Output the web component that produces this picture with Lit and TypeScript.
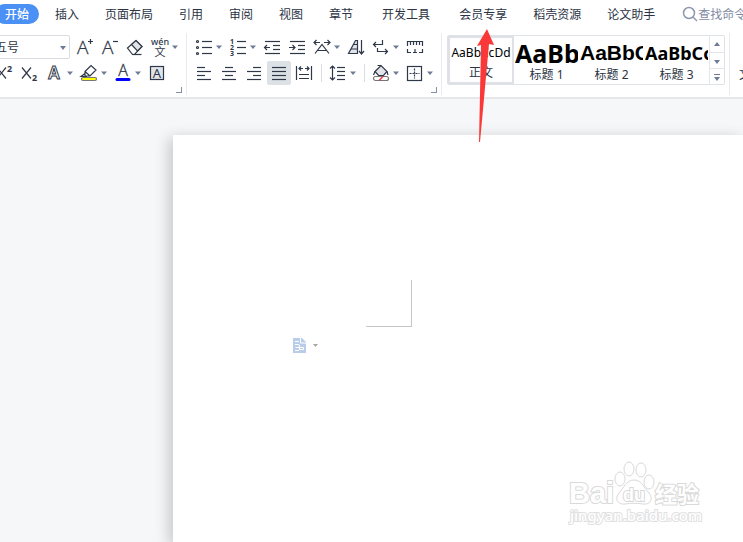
import { LitElement, html, svg, css, nothing, TemplateResult } from "lit";
import { customElement } from "lit/decorators.js";
import { classMap } from "lit/directives/class-map.js";

interface Tool {
  label: string;
  art: TemplateResult;
  menu?: boolean;
  active?: boolean;
}

const caret = svg`<path class="caret" d="M24 10.5h6l-3 3.5z"/>`;
const lines = (rows: number[][]) =>
  rows.map(([x1, x2, y]) => svg`<path d="M${x1} ${y}H${x2}"/>`);

const fontTop: Tool[] = [
  { label: "增大字号", art: svg`<text class="thin" x="4" y="19" font-size="19">A</text><path d="M15 6.5h5M17.500 4v5"/>` },
  { label: "减小字号", art: svg`<text class="thin" x="4" y="19" font-size="19">A</text><path d="M15 6.5h5"/>` },
  { label: "清除格式", art: svg`<path d="M4.500 13L13 5.500l6 6-7.500 8H9.500z"/><path class="tint" d="M8.500 9.500L13 5.500l6 6-4.500 4.500z"/><path d="M9.500 19.500h9"/>` },
  { label: "拼音指南", menu: true, art: svg`<text x="12" y="10" font-size="9" font-weight="500" text-anchor="middle">wén</text><text x="12" y="21" font-size="11" text-anchor="middle">文</text>` },
];

const fontBottom: Tool[] = [
  { label: "上标", art: svg`<path d="M4 6.500l9 11M13 6.500l-9 11"/><text class="script" x="14" y="11">2</text>` },
  { label: "下标", art: svg`<path d="M4 6.500l9 11M13 6.500l-9 11"/><text class="script" x="14" y="20">2</text>` },
  { label: "文字效果", menu: true, art: svg`<text class="outline" x="11" y="18" font-size="17" text-anchor="middle">A</text>` },
  { label: "突出显示", menu: true, art: svg`<path d="M8 10.500l6-6 5 4.500-6 6H8zM8 10.500l5 4.500M8 12.500l-4 3h6"/><rect class="marker" x="4.500" y="16.500" width="15" height="3" rx="1.500"/>` },
  { label: "字体颜色", menu: true, art: svg`<text class="thin" x="12" y="15" font-size="16" text-anchor="middle">A</text><path class="blue" d="M6 18.500h12"/>` },
  { label: "字符底纹", art: svg`<rect class="tint" x="5.500" y="5.500" width="13" height="13"/><text x="12" y="17" font-size="13" text-anchor="middle">A</text>` },
];

const paraTop: Tool[] = [
  { label: "项目符号", menu: true, art: svg`<circle cx="5.500" cy="6.500" r="1"/><circle cx="5.500" cy="12.500" r="1"/><circle cx="5.500" cy="18.500" r="1"/>${lines([[10, 20, 6.5], [10, 20, 12.5], [10, 20, 18.5]])}` },
  { label: "编号", menu: true, art: svg`<text class="num" x="4" y="9">1</text><text class="num" x="4" y="15">2</text><text class="num" x="4" y="21">3</text>${lines([[11, 20, 6.5], [11, 20, 12.5], [11, 20, 18.5]])}` },
  { label: "减少缩进量", art: svg`${lines([[5, 20, 6.5], [13, 20, 10.5], [13, 20, 14.5], [5, 20, 18.5]])}<path d="M10 12.500H4.500M7 10l-2.500 2.500L7 15"/>` },
  { label: "增加缩进量", art: svg`${lines([[5, 20, 6.5], [13, 20, 10.5], [13, 20, 14.5], [5, 20, 18.5]])}<path d="M4 12.500h6M7.500 10l2.500 2.500L7.500 15"/>` },
  { label: "中文版式", menu: true, art: svg`<path d="M4 7.500h6M6.500 5L4 7.500 6.500 10M14 7.500h6M17.500 5L20 7.500 17.500 10M5 18.500l7-9 7 9M8 15.500h8"/>` },
  { label: "排序", art: svg`<path class="tint" d="M4.500 18.500h9v-13h-2z"/><path d="M9.500 9.500h4M7 14h6.500M17.500 5v14M15 16l2.500 3 2.500-3"/>` },
  { label: "显示段落标记", menu: true, art: svg`<path d="M13.500 5v4.500h-9M7 7L4.500 9.500 7 12M8.500 13v3.500h10M16 14l2.500 2.500L16 19"/>` },
  { label: "标尺", art: svg`<path d="M4.500 11V6.500h15V11M7.500 7v3M10.500 7v3M13.500 7v3M16.500 7v3M4.500 14v3.500H8M10 17.500h4M12 14v3.500M16 17.500h3.500V14"/>` },
];

const paraAlign: Tool[] = [
  { label: "左对齐", art: svg`${lines([[5, 13, 6.5], [5, 19, 10.5], [5, 13, 14.5], [5, 19, 18.5]])}` },
  { label: "居中对齐", art: svg`${lines([[8, 16, 6.5], [5, 19, 10.5], [8, 16, 14.5], [5, 19, 18.5]])}` },
  { label: "右对齐", art: svg`${lines([[11, 19, 6.5], [5, 19, 10.5], [11, 19, 14.5], [5, 19, 18.5]])}` },
  { label: "两端对齐", active: true, art: svg`${lines([[5, 19, 6.5], [5, 19, 10.5], [5, 19, 14.5], [5, 19, 18.5]])}` },
  { label: "分散对齐", art: svg`<path d="M4.500 5v14M19.500 5v14M7 7.500h4M9 5.500l-2 2 2 2M13 7.500h4M15 5.500l2 2-2 2M7 13.500h10M7 17.500h10"/>` },
];
const paraSpacing: Tool[] = [
  { label: "行距", menu: true, art: svg`<path d="M6.500 5v14M4 7.500L6.500 5 9 7.500M4 16.500L6.500 19 9 16.500"/>${lines([[11, 19, 6.5], [11, 19, 10.5], [11, 19, 14.5], [11, 19, 18.5]])}` },
];
const paraFill: Tool[] = [
  { label: "底纹颜色", menu: true, art: svg`<path class="tint" d="M6 10.500l6-6 6 6-3.500 4h-5z"/><path d="M8.500 4.500h3.500M18 10.500l1 3.500M6 10.500l-1.500 3.500"/><rect class="swatch" x="4.500" y="15.500" width="15" height="4" rx="2"/><path class="red" d="M10 19.500l4-4"/>` },
  { label: "边框", menu: true, art: svg`<rect x="4.500" y="5.500" width="14" height="14"/><path stroke-dasharray="2 1" d="M11.500 7.500v10M6.500 12.500h10"/>` },
];

@customElement("tool-row")
class ToolRow extends LitElement {
  static properties = { tools: { attribute: false } };
  declare tools: Tool[];
  static styles = css`
    :host { display: flex; gap: 1px; flex: none; }
    button { width: 24px; height: 24px; padding: 0; border: 0; background: none; border-radius: 2px; flex: none; }
    .menu { width: 33px; }
    .active { background: #dce1e6; }
    svg { display: block; width: 100%; height: 24px; fill: none; stroke: #2f3848; stroke-width: 1.2px; overflow: visible; }
    text { fill: #2f3848; stroke: none; font-family: "Noto Sans", "Noto Sans CJK SC", sans-serif; }
    .thin { font-family: "Open Sans", sans-serif; font-weight: 300; stroke: #2f3848; stroke-width: 0.3px; }
    .outline { fill: #fff; stroke: #2f3848; stroke-width: 1px; font-weight: 600; }
    .num { font-size: 7px; font-weight: 700; }
    .script { font-size: 9px; font-weight: 700; }
    .caret { fill: #6f7a96; stroke: none; }
    .tint { fill: #e1e4e9; }
    .marker { fill: #ffff00; stroke: #777; }
    .blue { stroke: #0000ff; stroke-width: 3px; stroke-linecap: round; }
    .swatch { fill: #fff; stroke: #777; }
    .red { stroke: #e33; }
  `;
  render() {
    return this.tools.map(
      (t) => html`<button type="button" aria-label=${t.label} class=${classMap({ menu: !!t.menu, active: !!t.active })}>
        <svg viewBox=${t.menu ? "0 0 33 24" : "0 0 24 24"}>${t.art}${t.menu ? caret : nothing}</svg>
      </button>`
    );
  }
}

@customElement("app-root")
class AppRoot extends LitElement {
  static styles = css`
    :host {
      display: flex; flex-direction: column; position: relative; min-height: 100vh; overflow: hidden;
      background: #f5f7f9; color: #2b3344; font: 12px/20px "Noto Sans", "Noto Sans CJK SC", sans-serif;
    }
    button, select, input { font: inherit; color: inherit; margin: 0; }
    button { border: 0; background: none; padding: 0; }
    header { background: #fff; border-bottom: 2px solid #e6e7e9; overflow: hidden; }
    .tabs { display: flex; height: 28px; align-items: center; white-space: nowrap; font-family: "Noto Sans CJK SC", sans-serif; }
    .tabs button { padding: 0 13px; flex: none; height: 20px; line-height: 20px; }
    .tabs .current { margin: 0 3px 0 -5px; padding: 0 10px; border-radius: 10px; background: #4a90f5; color: #fff; font-weight: 500; }
    .tabs .spaced { margin: 0 3px; }
    .search { display: flex; align-items: center; margin-left: 14px; flex: none; }
    .search svg { width: 16px; height: 16px; fill: none; stroke: #8e97ad; stroke-width: 1.5px; }
    .search input { width: 60px; height: 20px; border: 0; padding: 0; background: none; outline: 0; }
    .search input::placeholder { color: #7f89a3; opacity: 1; }
    .ribbon { display: flex; height: 62px; margin: 5px 0 2px; white-space: nowrap; }
    .group { display: flex; flex-direction: column; flex: none; gap: 2px; padding: 2px 4px 0 5px; border-right: 1px solid #e8eaed; }
    .group > div { display: flex; }
    .font { width: 177px; padding-left: 5px; }
    .font .size { margin: 0 3px 0 -13px; align-items: center; }
    .font .shift { margin-left: -12px; }
    .para { width: 245px; }
    .size { display: flex; position: relative; }
    .size select { appearance: none; width: 78px; height: 24px; padding: 2px 0 0 2px; border: 1px solid #d9dce1; border-radius: 2px; background: #fff; }
    .size svg { position: absolute; right: 4px; top: 11px; width: 6px; height: 4px; fill: #6f7a96; }
    .rule { width: 1px; height: 18px; margin: 3px 4px 0 5px; background: #d9dce1; }
    .launcher { align-self: flex-end; width: 6px; height: 6px; border-right: 1px solid #8690a5; border-bottom: 1px solid #8690a5; }
    .gallery { height: 48px; border: 1px solid #dfe2e7; border-radius: 2px; }
    .style { display: flex; flex-direction: column; width: 65px; height: 48px; overflow: hidden; padding: 0 1px; color: #2b3344; }
    .style.chosen { width: 66px; padding: 0; border: 2px solid #dfe1e7; }
    .sample { display: block; height: 30px; width: 100%; line-height: 34px; overflow: hidden; text-align: left; color: #000; }
    .name { display: block; width: 100%; height: 18px; line-height: 18px; text-align: center; }
    .chosen .sample { height: 28px; line-height: 30px; text-align: center; }
    .h1 { font-size: 25px; font-weight: 700; }
    .h2 { font-family: "Liberation Sans", sans-serif; font-size: 21px; font-weight: 700; }
    .h3 { font-size: 18px; font-weight: 700; }
    .scroll { display: grid; width: 14px; grid-template-rows: repeat(3, 1fr); border-left: 1px solid #e4e6ea; }
    .scroll button + button { border-top: 1px solid #e4e6ea; }
    .scroll svg { display: block; width: 14px; height: 14px; fill: #6f7a96; }
    .more { padding: 32px 0 0 9px; }
    main { display: flex; flex: 1; padding: 36px 0 0 173px; }
    article { flex: 1; background: #fff; padding: 145px 0 0 120px; box-shadow: -4px 3px 14px rgba(0, 0, 0, 0.2); }
    .corner { width: 45px; height: 46px; margin-left: 73px; border-right: 1px solid #c6c6c6; border-bottom: 1px solid #c6c6c6; }
    .paste { display: block; margin-top: 10px; }
    .paste svg { display: block; width: 28px; height: 18px; }
    .arrow { position: absolute; left: 474px; top: 26px; width: 24px; height: 120px; fill: #fb3838; pointer-events: none; }
    .mark { position: absolute; right: 33px; bottom: 12px; width: 144px; height: 72px; fill: #fff; stroke: #d9d9d9; }
    .mark text { font-family: "Noto Sans", "Noto Sans CJK SC", sans-serif; font-weight: 700; paint-order: stroke; stroke-width: 2px; }
    .mark .brand { font-family: "Liberation Sans", sans-serif; }
    .mark .site { font-weight: 500; stroke: #e0e0e0; }
  `;
  private tabs = ["插入", "页面布局", "引用", "审阅", "视图", "章节", "开发工具", "会员专享", "稻壳资源", "论文助手"];
  private headings = ["AaBb", "AaBbC", "AaBbCc"];

  render() {
    return html`
      <header>
        <nav class="tabs">
          <button type="button" class="current">开始</button>
          ${this.tabs.map((t) => html`<button type="button" class=${classMap({ spaced: t === "开发工具" })}>${t}</button>`)}
          <label class="search">
            <svg viewBox="0 0 16 16"><circle cx="7" cy="7" r="5.500"/><path d="M11 11l4 4"/></svg>
            <input type="search" aria-label="查找命令" placeholder="查找命令" />
          </label>
        </nav>
        <div class="ribbon">
          <section class="group font">
            <div>
              <div class="size">
                <select aria-label="字号"><option>五号</option></select>
                <svg viewBox="0 0 6 4"><path d="M0 0h6L3 4z"/></svg>
              </div>
              <tool-row .tools=${fontTop}></tool-row>
            </div>
            <div><tool-row class="shift" .tools=${fontBottom}></tool-row></div>
            <button type="button" class="launcher" aria-label="字体设置"></button>
          </section>
          <section class="group para">
            <div><tool-row .tools=${paraTop}></tool-row></div>
            <div>
              <tool-row .tools=${paraAlign}></tool-row><span class="rule"></span>
              <tool-row .tools=${paraSpacing}></tool-row><span class="rule"></span>
              <tool-row .tools=${paraFill}></tool-row>
            </div>
            <button type="button" class="launcher" aria-label="段落设置"></button>
          </section>
          <section class="group">
            <div class="gallery">
              <button type="button" class="style chosen"><span class="sample">AaBbCcDd</span><span class="name">正文</span></button>
              ${this.headings.map((s, i) => html`<button type="button" class="style">
                <span class="sample h${i + 1}">${s}</span><span class="name">标题 ${i + 1}</span></button>`)}
              <div class="scroll">
                <button type="button" aria-label="向上"><svg viewBox="0 0 14 14"><path d="M4 9h6L7 5z"/></svg></button>
                <button type="button" aria-label="向下"><svg viewBox="0 0 14 14"><path d="M4 6h6l-3 4z"/></svg></button>
                <button type="button" aria-label="更多样式"><svg viewBox="0 0 14 14"><path d="M4 4h6v1H4zM4 7h6l-3 4z"/></svg></button>
              </div>
            </div>
          </section>
          <div class="more">文字排版</div>
        </div>
      </header>
      <main>
        <article>
          <div class="corner"></div>
          <button type="button" class="paste" aria-label="粘贴选项">
            <svg viewBox="0 0 28 18">
              <path fill="#b9cdea" d="M0 1h9l4 4v11H0z"/>
              <path fill="none" stroke="#fff" d="M7.500 1v5H13M2 4.500h4M2 7.500h4M2 13.500h4M6.500 8v5M2.500 10.500h8v2h-4"/>
              <path fill="#a6a6a6" d="M20 7h5l-2.500 3z"/>
            </svg>
          </button>
        </article>
      </main>
      <svg class="arrow" viewBox="0 0 24 120" aria-hidden="true"><path d="M13 3l7 16-5-1L6 116H5L7 19l-4 1z"/></svg>
      <svg class="mark" viewBox="0 0 144 72" role="img" aria-label="Baidu 经验">
        <ellipse cx="54" cy="21" rx="5" ry="7"/><ellipse cx="63" cy="11" rx="5" ry="7"/>
        <ellipse cx="75" cy="12" rx="5" ry="7"/><ellipse cx="83" cy="24" rx="5" ry="7"/>
        <path d="M68 22c8 0 10 8 15 13 5 6 1 12-6 11-6-1-12-1-18 0-7 1-11-5-6-11 5-5 7-13 15-13z"/>
        <text class="brand" x="3" y="45" font-size="29">Bai</text>
        <text class="brand" x="68" y="43" font-size="18" text-anchor="middle">du</text>
        <text x="89" y="44" font-size="22">经验</text>
        <text class="site" x="4" y="63" font-size="15">jingyan.baidu.com</text>
      </svg>
    `;
  }
}
